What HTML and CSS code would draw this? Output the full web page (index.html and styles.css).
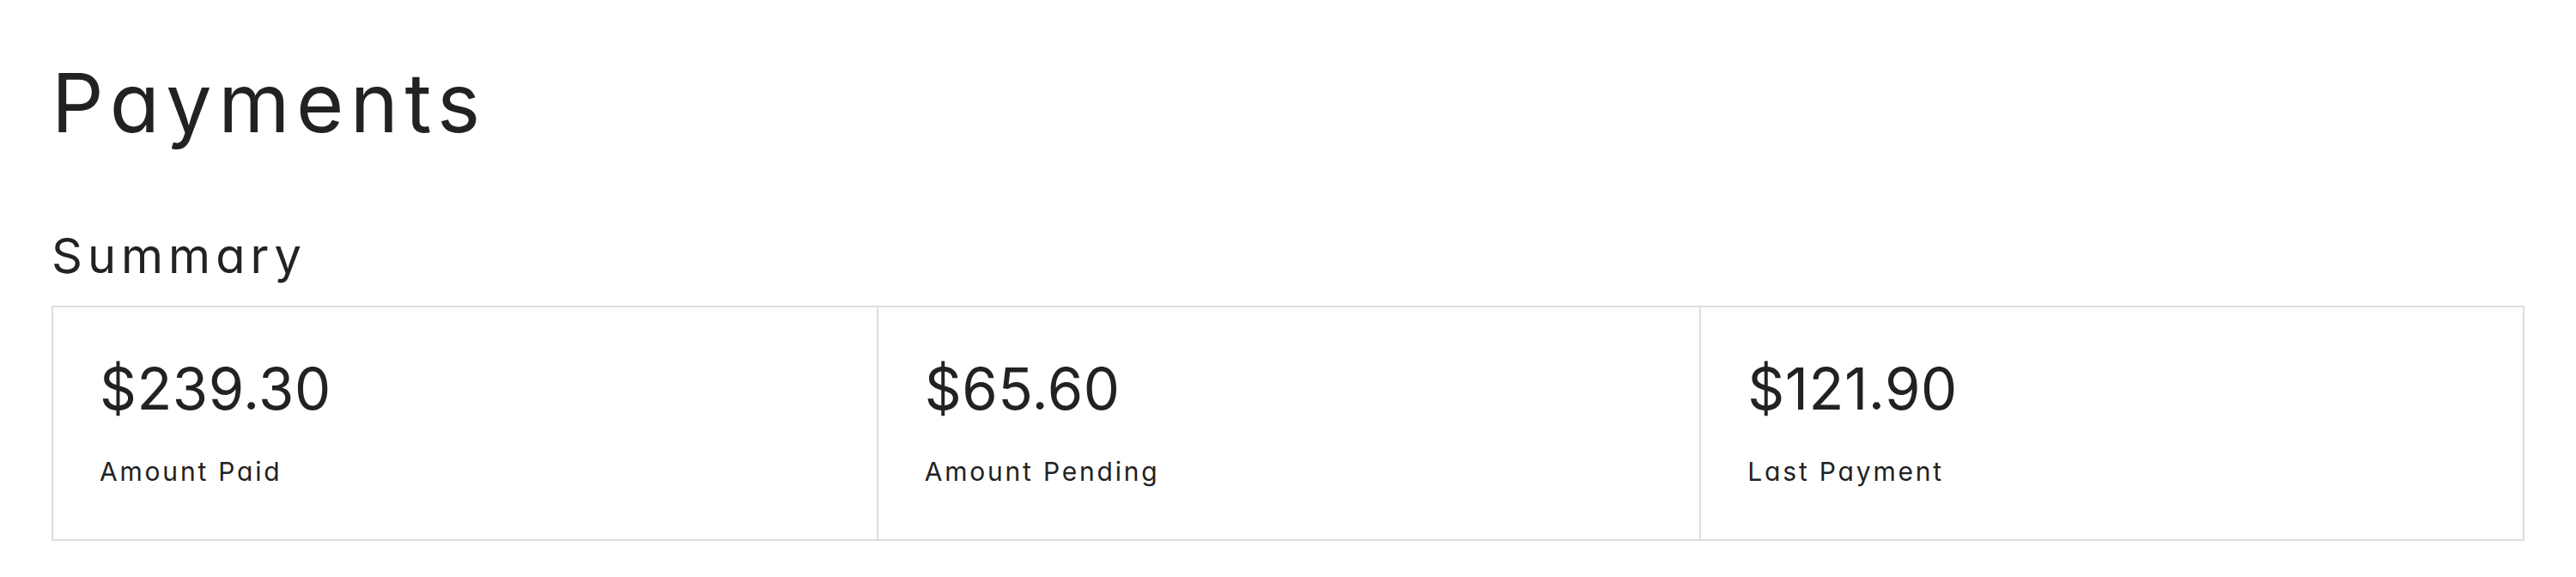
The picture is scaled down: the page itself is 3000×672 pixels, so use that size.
FILE: index.html
```html
<!DOCTYPE html>
<html lang="en">
<head>
    <meta charset="UTF-8">
    <meta name="viewport" content="width=device-width, initial-scale=1.0">
    <title>Payments</title>
    <link rel="stylesheet" href="styles.css">
</head>
<body>
    <div id="page">
        <h1 class="page-title">Payments</h1>

        <h2 class="section-title">Summary</h2>
        <div class="summary">
            <div class="summary-item">
                <div class="summary-value">$239.30</div>
                <div class="summary-label">Amount Paid</div>
            </div>
            <div class="summary-item">
                <div class="summary-value">$65.60</div>
                <div class="summary-label">Amount Pending</div>
            </div>
            <div class="summary-item">
                <div class="summary-value">$121.90</div>
                <div class="summary-label">Last Payment</div>
            </div>
        </div>
    </div>
</body>
</html>
```

FILE: styles.css
```css
body {
    font-family: Inter, "Open Sans", sans-serif;
    font-feature-settings: "cv11";
    background-color: #fff;
    color: #222;
    margin: 0;
    padding: 0;
}
#page {
    padding: 72px 60px 0;
}
.page-title {
    font-size: 95px;
    font-weight: 400;
    line-height: 1;
    letter-spacing: 7.5px;
    margin: 0;
}
.section-title {
    font-size: 56px;
    font-weight: 400;
    line-height: 1;
    letter-spacing: 6px;
    margin: 103px 0 30px;
}
.summary {
    display: grid;
    grid-template-columns: 1fr 1fr 1fr;
    border: 2px solid #dedede;
}
.summary-item {
    padding: 61px 54px 64px;
}
.summary-item + .summary-item {
    border-left: 2px solid #dedede; /* divider between columns */
}
.summary-value {
    font-size: 67px;
    line-height: 1;
    letter-spacing: 0.5px;
}
.summary-label {
    font-size: 30px;
    line-height: 1;
    letter-spacing: 2.8px;
    margin-top: 48px;
}
```
